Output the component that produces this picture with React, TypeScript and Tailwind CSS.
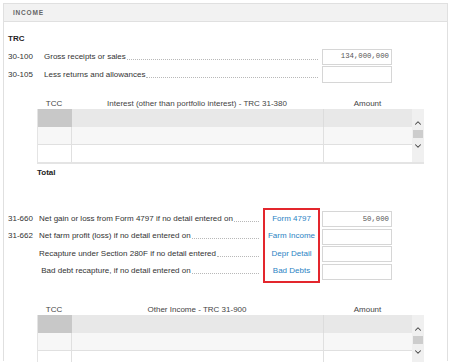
import { ChevronUp, ChevronDown } from 'lucide-react';

function LabelLeader({ label }: { label: string }) {
  return (
    <div className="flex-1 flex items-end h-[10px] leading-[10px]">
      <span className="whitespace-pre">{label}</span>
      <div className="flex-1 mx-[1px] mb-[2px] border-b border-dotted border-[#b8b8b8] h-0" />
    </div>
  );
}

function AmountBox({ value, className = '' }: { value?: string; className?: string }) {
  return (
    <div
      className={`w-[70px] border border-[#d6d6d6] bg-white flex items-center justify-end pr-[2px] text-[7.3px] text-[#555] ${className}`}
      style={{ fontFamily: '"Liberation Mono", monospace' }}
    >
      {value}
    </div>
  );
}

function GridTable({ title }: { title: string }) {
  return (
    <div className="ml-[29px] w-[387px]">
      <div className="flex h-[11px] items-center text-[8px] text-[#444]">
        <div className="w-[34px] text-center">TCC</div>
        <div className="w-[252px] text-center">{title}</div>
        <div className="w-[89px] text-center">Amount</div>
      </div>
      <div className="flex border-b-2 border-[#e4e4e4]">
        <div className="flex-1 border-l border-[#e4e4e4]">
          <div className="flex h-[18px] bg-[#e8e8e8]">
            <div className="w-[34px] bg-[#c8c8c8]" />
            <div className="w-[252px] border-r border-[#dcdcdc]" />
            <div className="flex-1" />
          </div>
          <div className="flex h-[18px] bg-[#f7f7f7] border-b border-[#e0e0e0]">
            <div className="w-[34px] border-r border-[#e0e0e0]" />
            <div className="w-[252px] border-r border-[#e0e0e0]" />
            <div className="flex-1" />
          </div>
          <div className="flex h-[17px] bg-white">
            <div className="w-[34px] border-r border-[#e0e0e0]" />
            <div className="w-[252px] border-r border-[#e0e0e0]" />
            <div className="flex-1" />
          </div>
        </div>
        <div className="w-[12px] bg-[#f0f0f0] flex flex-col items-center pt-[9px]">
          <ChevronUp size={10} strokeWidth={2.5} className="text-[#444]" />
          <div className="w-[10px] h-[8px] bg-[#cdcdcd] mt-[2px]" />
          <ChevronDown size={10} strokeWidth={2.5} className="text-[#444] mt-[3px]" />
        </div>
      </div>
    </div>
  );
}

export default function App() {
  const linkRows = [
    { code: '31-660', label: 'Net gain or loss from Form 4797 if no detail entered on', link: 'Form 4797', value: '50,000' },
    { code: '31-662', label: 'Net farm profit (loss) if no detail entered on', link: 'Farm Income', value: '' },
    { code: '', label: 'Recapture under Section 280F if no detail entered', link: 'Depr Detail', value: '' },
    { code: '', label: ' Bad debt recapture, if no detail entered on', link: 'Bad Debts', value: '' },
  ];

  return (
    <div
      className="w-[452px] h-[362px] bg-white overflow-hidden"
      style={{ fontFamily: '"Liberation Sans", Arial, sans-serif' }}
    >
      <div className="h-[361px] border-b border-[#dcdcdc]">
        <div className="ml-[3px] mt-[3px] w-[445px] h-[358px] border-x border-t border-[#e0e0e0]">
          <div className="h-[18px] bg-[#f2f2f2] border-b border-[#e0e0e0] flex items-center pl-[9px] text-[6.5px] font-bold tracking-[0.8px] text-[#666]">
            INCOME
          </div>

          <div className="pl-[4px] text-[8px] text-[#333]">
            <div className="mt-[12px] h-[10px] leading-[10px] font-bold text-[#222]">TRC</div>

            <div className="mt-[4px] flex h-[17px] items-center">
              <div className="w-[36px]">30-100</div>
              <LabelLeader label="Gross receipts or sales" />
              <AmountBox value="134,000,000" className="h-[16px] ml-[3px] mr-[55px]" />
            </div>
            <div className="mt-[1px] flex h-[17px] items-center">
              <div className="w-[36px]">30-105</div>
              <LabelLeader label="Less returns and allowances" />
              <AmountBox className="h-[17px] ml-[3px] mr-[55px]" />
            </div>

            <div className="mt-[15px]">
              <GridTable title="Interest (other than portfolio interest) - TRC 31-380" />
            </div>

            <div className="mt-[4px] ml-[29px] h-[10px] leading-[10px] font-bold text-[#222]">Total</div>

            <div className="mt-[30px] flex">
              <div className="flex-1 pt-[2px]">
                {linkRows.map((r, i) => (
                  <div key={i} className="flex h-[17.5px] items-center">
                    <div className="w-[31px]">{r.code}</div>
                    <LabelLeader label={r.label} />
                  </div>
                ))}
              </div>
              <div className="ml-[3px] w-[57px] h-[75px] border-2 border-[#e3262d] flex flex-col">
                {linkRows.map((r, i) => (
                  <div key={i} className="h-[17.5px] flex items-center justify-center text-[#2b83c4]">
                    {r.link}
                  </div>
                ))}
              </div>
              <div className="ml-[2px] mr-[55px] pt-[3px] flex flex-col gap-[1.5px]">
                {linkRows.map((r, i) => (
                  <AmountBox key={i} value={r.value} className="h-[16px]" />
                ))}
              </div>
            </div>

            <div className="mt-[21px]">
              <GridTable title="Other Income - TRC 31-900" />
            </div>
          </div>
        </div>
      </div>
    </div>
  );
}
